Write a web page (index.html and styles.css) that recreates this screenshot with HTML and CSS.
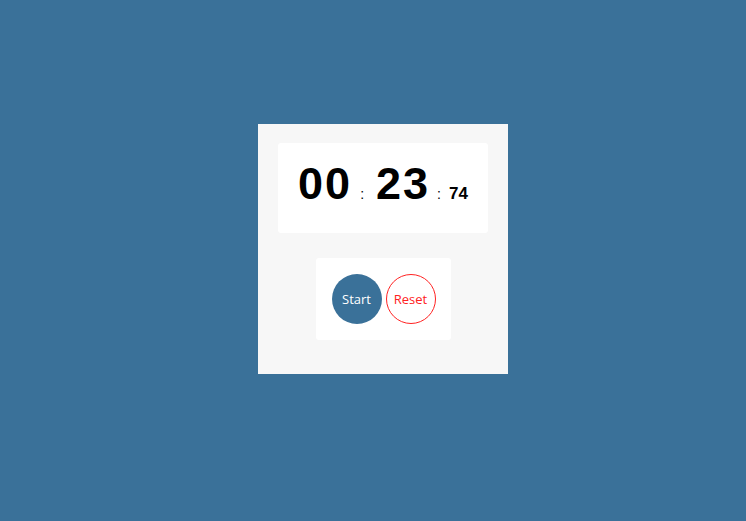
FILE: index.html
```html
<!DOCTYPE html>
<html>
<head>
<meta charset="utf-8">
<link rel="stylesheet" href="styles.css">
</head>
<body>
<div class="card">
  <div class="display">
    <span class="big">00</span>
    <span class="colon first">:</span>
    <span class="big">23</span>
    <span class="colon second">:</span>
    <span class="small">74</span>
  </div>
  <div class="controls">
    <button class="btn start">Start</button>
    <button class="btn reset">Reset</button>
  </div>
</div>
</body>
</html>
```
FILE: styles.css
```css
html, body {
  margin: 0;
  height: 100%;
}
body {
  background: #3a7199;
  display: flex;
  justify-content: center;
  align-items: center;
  padding: 0 0 23px 20px;
  box-sizing: border-box;
  font-family: "Liberation Sans", Arial, sans-serif;
}
.card {
  width: 250px;
  height: 250px;
  background: #f7f7f7;
  padding-top: 19px;
  box-sizing: border-box;
  display: flex;
  flex-direction: column;
  align-items: center;
}
.display {
  width: 210px;
  height: 90px;
  background: #fff;
  border-radius: 3px;
  display: flex;
  justify-content: center;
  align-items: baseline;
  padding-top: 18px;
  box-sizing: border-box;
  color: #000;
}
.big {
  font-size: 45px;
  font-weight: 700;
  line-height: 45px;
  letter-spacing: 2px;
}
.colon {
  font-size: 14px;
}
.colon.first {
  margin: 0 12px 0 8px;
}
.colon.second {
  margin: 0 8px 0 7px;
}
.small {
  font-size: 17px;
  font-weight: 700;
}
.controls {
  margin-top: 25px;
  width: 135px;
  height: 82px;
  background: #fff;
  border-radius: 3px;
  display: flex;
  align-items: center;
  padding-left: 16px;
  gap: 4px;
  box-sizing: border-box;
}
.btn {
  width: 50px;
  height: 50px;
  border-radius: 50%;
  font-family: "Open Sans", "Noto Sans", sans-serif;
  font-size: 13px;
  padding: 0;
  cursor: pointer;
}
.start {
  background: #3a7199;
  color: #fff;
  border: none;
}
.reset {
  background: #fff;
  color: #ff2222;
  border: 1px solid #ff2222;
}
```
